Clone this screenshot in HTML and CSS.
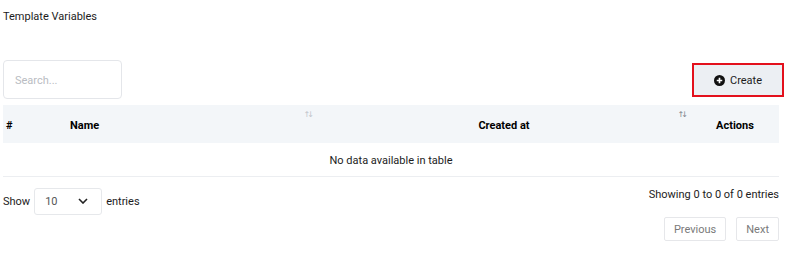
FILE: index.html
```html
<!DOCTYPE html>
<html>
  <head>
    <meta charset="UTF-8">
    <meta name="viewport" content="width=device-width, initial-scale=1.0">
    <title>Template Variables</title>
    <link rel="stylesheet" href="styles.css">
  </head>
  <body>
    <div class="wrapper">
      <h1 class="page-title">Template Variables</h1>

      <div class="toolbar">
        <input class="search" type="text" placeholder="Search...">
        <div class="create-frame">
          <button class="create-btn">
            <svg class="plus-icon" width="11" height="11" viewBox="0 0 16 16">
              <circle cx="8" cy="8" r="8" fill="#111"/>
              <path d="M8 4v8M4 8h8" stroke="#fff" stroke-width="2.4"/>
            </svg>
            Create
          </button>
        </div>
      </div>

      <table class="data-table">
        <thead>
          <tr>
            <th class="col-num">#</th>
            <th class="col-name sortable">Name</th>
            <th class="col-date sortable active">Created at</th>
            <th class="col-actions">Actions</th>
          </tr>
        </thead>
        <tbody>
          <tr>
            <td class="empty" colspan="4">No data available in table</td>
          </tr>
        </tbody>
      </table>

      <div class="table-footer">
        <div class="length">
          Show
          <div class="select">
            <span>10</span>
            <svg width="10" height="6" viewBox="0 0 10 6">
              <path d="M1 1l4 4 4-4" fill="none" stroke="#222" stroke-width="1.6"/>
            </svg>
          </div>
          entries
        </div>
        <div class="info-side">
          <div class="info">Showing 0 to 0 of 0 entries</div>
          <div class="paginate">
            <button class="page-btn">Previous</button>
            <button class="page-btn">Next</button>
          </div>
        </div>
      </div>
    </div>
  </body>
</html>
```

FILE: styles.css
```css
body {
  margin: 0;
  background-color: #fff;
  color: #1c1c1c;
  font-family: Roboto, "Noto Sans", sans-serif;
  font-size: 11px;
}

.wrapper {
  width: 776px;
  padding: 0 0 0 3px;
}

.page-title {
  font-size: 11px;
  font-weight: normal;
  line-height: 14px;
  margin: 10px 0 0 0;
}

.toolbar {
  display: flex;
  justify-content: space-between;
  align-items: center;
  margin-top: 36px;
}

.search {
  box-sizing: border-box;
  width: 119px;
  height: 39px;
  border: 1px solid #e4e6ea;
  border-radius: 4px;
  padding: 2px 11px 0 11px;
  font-family: inherit;
  font-size: 11px;
  color: #333;
  outline: none;
}

.search::placeholder {
  color: #b9bcc2;
}

.create-frame {
  border: 2px solid #e3101c;
  margin-right: -5px;
}

.create-btn {
  display: flex;
  align-items: center;
  gap: 5px;
  box-sizing: border-box;
  width: 88px;
  height: 30px;
  padding: 2px 0 0 20px;
  border: none;
  background-color: #eceff3;
  font-family: inherit;
  font-size: 11px;
  color: #1c1c1c;
}

.data-table {
  width: 776px;
  margin-top: 6px;
  border-collapse: collapse;
  table-layout: fixed;
}

.data-table th {
  position: relative;
  box-sizing: border-box;
  height: 38px;
  padding: 2px 0 0 0;
  background-color: #f3f6f9;
  font-weight: bold;
  color: #000;
  text-align: left;
  vertical-align: middle;
}

.col-num {
  width: 57px;
  padding-left: 3px !important;
}

.col-name {
  width: 257px;
  padding-left: 10px !important;
}

.col-date {
  text-align: center !important;
}

.col-actions {
  width: 88px;
  text-align: center !important;
}

.sortable::after {
  content: "\2191\2193";
  position: absolute;
  right: 6px;
  top: 5px;
  font-family: "DejaVu Sans", sans-serif;
  font-size: 8px;
  font-weight: normal;
  letter-spacing: -3px;
  color: #bfc4cb;
}

.sortable.active::after {
  color: #7f858d;
}

.empty {
  box-sizing: border-box;
  height: 33px;
  padding: 3px 0 0 0;
  text-align: center;
  border-bottom: 1px solid #eceef1;
}

.table-footer {
  display: flex;
  justify-content: space-between;
  margin-top: 10px;
}

.length {
  display: flex;
  align-items: center;
  gap: 4px;
  height: 27px;
  padding-top: 1px;
}

.select {
  box-sizing: border-box;
  display: flex;
  justify-content: space-between;
  align-items: center;
  width: 68px;
  height: 27px;
  padding: 0 13px 0 10px;
  border: 1px solid #e6e8eb;
  border-radius: 3px;
  color: #555;
}

.info-side {
  display: flex;
  flex-direction: column;
  align-items: flex-end;
}

.info {
  line-height: 14px;
  padding-top: 1px;
}

.paginate {
  display: flex;
  gap: 10px;
  margin-top: 15px;
}

.page-btn {
  box-sizing: border-box;
  height: 24px;
  padding: 1px 9px 0 9px;
  border: 1px solid #e6e7ea;
  border-radius: 2px;
  background-color: #fff;
  font-family: inherit;
  font-size: 11px;
  color: #7a7a7a;
}
```
